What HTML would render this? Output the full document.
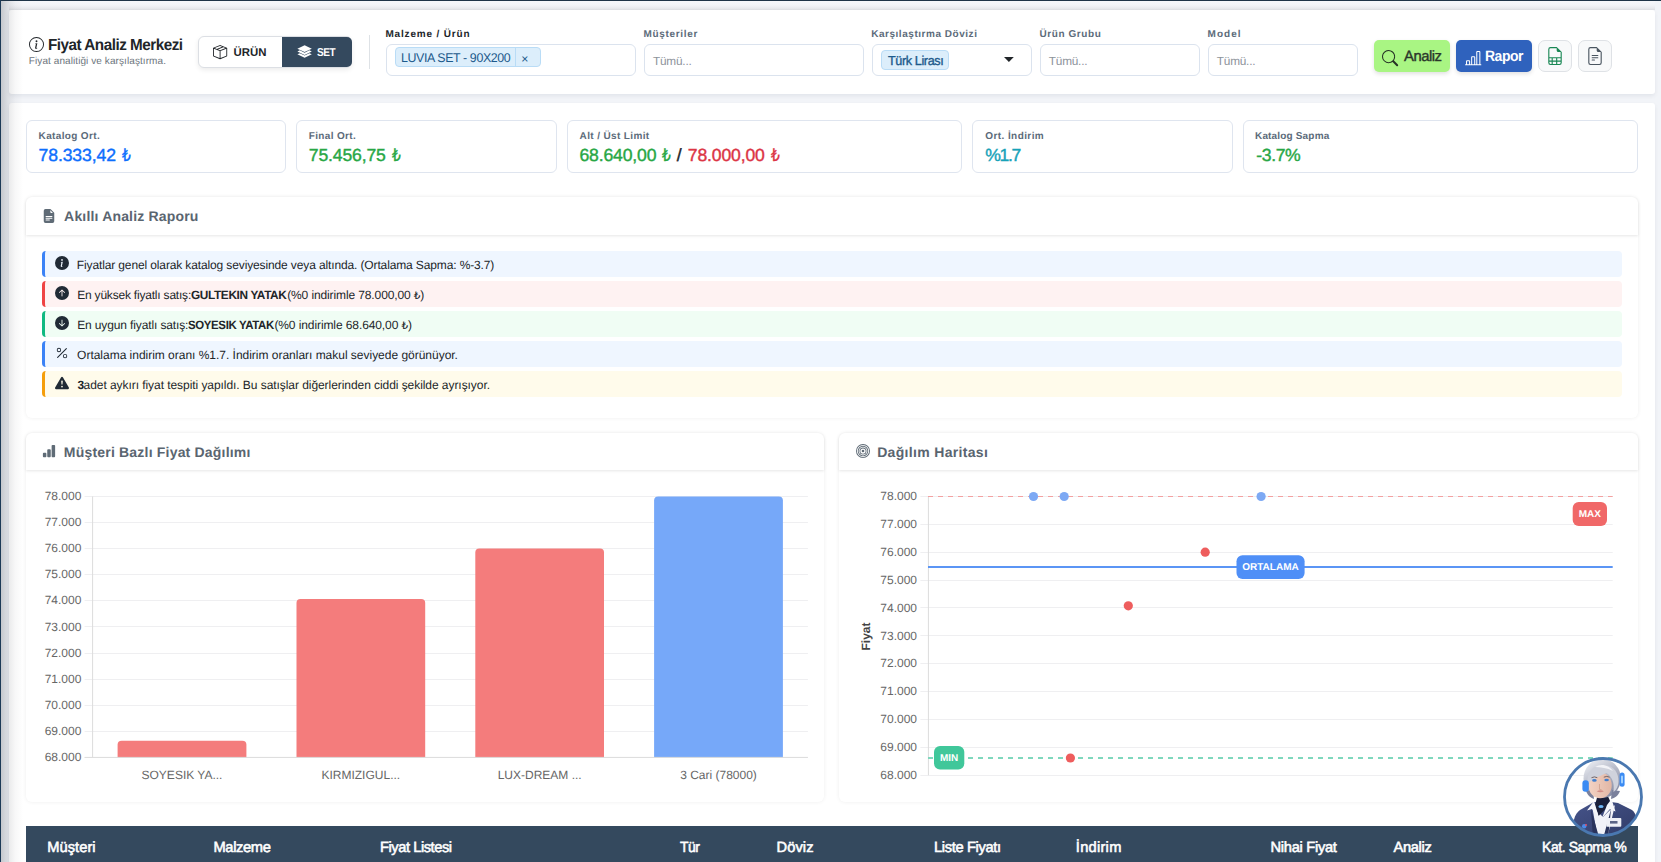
<!DOCTYPE html><html lang="tr"><head><meta charset="utf-8"><title>Fiyat Analiz Merkezi</title><style>
*{box-sizing:border-box}
html,body{margin:0;padding:0}
body{width:1661px;height:862px;overflow:hidden;position:relative;background:#f2f4f8;font-family:"Liberation Sans","DejaVu Sans",sans-serif;color:#212529;text-rendering:geometricPrecision}
.t{position:absolute;white-space:pre;line-height:1}
.tl{font-size:.86em}
.ic,.chart{position:absolute;display:block;overflow:visible}
.chart text{font-family:"Liberation Sans",sans-serif}
.card{position:absolute;background:#fff;border-radius:3px;box-shadow:0 2px 4px rgba(20,30,60,.07)}
.tog{position:absolute;background:#fff;border:1px solid #dcdfe4;border-radius:6px;box-shadow:0 2px 5px rgba(0,0,0,.08)}
.tog-on{position:absolute;background:#34495e;border-radius:0 5px 5px 0}
.vsep{position:absolute;width:1px;background:#dee2e6}
.sel{position:absolute;background:#fff;border:1px solid #dbe3ee;border-radius:6px}
.chip{position:absolute;background:#dceefb;border:1px solid #b9dcf6;border-radius:4px}
.chip i{position:absolute;top:0;bottom:0;width:1px;background:#b9dcf6}
.btn{position:absolute;border-radius:5px;box-shadow:0 2px 4px rgba(0,0,0,.12)}
.ibtn{position:absolute;background:#f8f9fa;border:1px solid #dfe2e6;border-radius:7px}
.kpi{position:absolute;background:#fff;border:1px solid #dfe5ef;border-radius:6px}
.pcard{position:absolute;background:#fff;border-radius:6px;box-shadow:0 0 4px rgba(0,0,0,.07)}
.phead{height:37.5px;border-radius:6px 6px 0 0;box-shadow:0 1px 3px rgba(0,0,0,.1)}
.arow{position:absolute;left:42px;width:1579.5px;height:25.7px;border-left:3px solid;border-radius:4px}
.topsh{position:absolute;left:9px;top:1px;width:1646px;height:9px;background:linear-gradient(180deg,#f6f7fa 0,#f3f4f8 45%,#eaebef 75%,#dfe0e4 100%)}
.thead{position:absolute;background:#34495e}
.edge-t{position:absolute;left:0;top:0;width:100%;height:1px;background:#1f3448}
.edge-l{position:absolute;left:0;top:0;width:1px;height:100%;background:#1d3a57}
.shade{position:absolute;left:1px;top:1px;width:22px;height:100%;background:linear-gradient(90deg,rgba(20,25,35,.2),rgba(20,25,35,.1) 30%,rgba(20,25,35,.03) 65%,rgba(20,25,35,0));pointer-events:none}
</style></head><body><div class="topsh"></div>
<header class="card hdr" style="left:9px;top:10px;width:1646px;height:84px">
<svg class="ic" style="left:20px;top:27px" width="15" height="15" viewBox="0 0 16 16" fill="#212529"><path d="M8 15A7 7 0 1 1 8 1a7 7 0 0 1 0 14m0 1A8 8 0 1 0 8 0a8 8 0 0 0 0 16"/><path d="m8.93 6.588-2.29.287-.082.38.45.083c.294.07.352.176.288.469l-.738 3.468c-.194.897.105 1.319.808 1.319.545 0 1.178-.252 1.465-.598l.088-.416c-.2.176-.492.246-.686.246-.275 0-.375-.193-.304-.533zM9 4.5a1 1 0 1 1-2 0 1 1 0 0 1 2 0"/></svg>
</header>
<span class="t" style="left:47.6px;top:38px;font-size:16px;font-weight:700;color:#212529;letter-spacing:-0.503px;transform:scaleX(0.952);transform-origin:0 0;">Fiyat Analiz Merkezi</span>
<span class="t" style="left:28.8px;top:57px;font-size:10px;color:#6c757d;letter-spacing:0.083px;">Fiyat analitiği ve karşılaştırma.</span>
<div class="tog" style="left:198px;top:36px;width:154px;height:32px"><div class="tog-on" style="left:83px;top:0;width:70px;height:30px"></div></div>
<svg class="ic" style="left:213.3px;top:44.8px" width="14.2" height="14.2" viewBox="0 0 16 16" fill="#212529"><path d="M8.186 1.113a.5.5 0 0 0-.372 0L1.846 3.5l2.404.961L10.404 2zm3.564 1.426L5.596 5 8 5.961 14.154 3.5zm3.25 1.7-6.5 2.6v7.922l6.5-2.6V4.24zM7.5 14.762V6.838L1 4.239v7.923zM7.443.184a1.5 1.5 0 0 1 1.114 0l7.129 2.852A.5.5 0 0 1 16 3.5v8.662a1 1 0 0 1-.629.928l-7.185 2.874a.5.5 0 0 1-.372 0L.63 13.09a1 1 0 0 1-.63-.928V3.5a.5.5 0 0 1 .314-.464z"/></svg>
<span class="t" style="left:233.4px;top:48px;font-size:11.4px;font-weight:700;color:#212529;letter-spacing:0.067px;">ÜRÜN</span>
<svg class="ic" style="left:296.8px;top:44.0px" width="15.2" height="15.2" viewBox="0 0 16 16" fill="#fff"><path d="M8 1.3 15.6 4.9 8 8.5.4 4.9z"/><path d="M.4 7.9 2.9 6.7 8 9.1l5.1-2.4 2.5 1.2L8 11.5z"/><path d="M.4 10.9 2.9 9.7 8 12.1l5.1-2.4 2.5 1.2L8 14.5z"/></svg>
<span class="t" style="left:317.4px;top:48px;font-size:11.4px;font-weight:700;color:#fff;letter-spacing:-0.538px;transform:scaleX(0.883);transform-origin:0 0;">SET</span>
<div class="vsep" style="left:369px;top:35px;height:34px"></div>
<span class="t" style="left:385.4px;top:30px;font-size:10px;font-weight:700;color:#212529;letter-spacing:0.838px;">Malzeme / Ürün</span>
<span class="t" style="left:643.4px;top:30px;font-size:10px;font-weight:700;color:#5c6b7a;letter-spacing:0.689px;">Müşteriler</span>
<span class="t" style="left:871.2px;top:30px;font-size:10px;font-weight:700;color:#5c6b7a;letter-spacing:0.534px;">Karşılaştırma Dövizi</span>
<span class="t" style="left:1039.5px;top:30px;font-size:10px;font-weight:700;color:#5c6b7a;letter-spacing:0.578px;">Ürün Grubu</span>
<span class="t" style="left:1207.6px;top:30px;font-size:10px;font-weight:700;color:#5c6b7a;letter-spacing:1.025px;">Model</span>
<div class="sel" style="left:386px;top:44px;width:250px;height:32px"></div>
<div class="sel" style="left:644px;top:44px;width:220px;height:32px"></div>
<div class="sel" style="left:872px;top:44px;width:160px;height:32px"></div>
<div class="sel" style="left:1040px;top:44px;width:160px;height:32px"></div>
<div class="sel" style="left:1208px;top:44px;width:150px;height:32px"></div>
<div class="chip" style="left:395px;top:47px;width:146px;height:20px"><i style="left:119px"></i></div>
<span class="t" style="left:400.9px;top:52px;font-size:12.6px;color:#1d5a8c;letter-spacing:-0.383px;transform:scaleX(0.983);transform-origin:0 0;">LUVIA SET - 90X200</span>
<span class="t" style="left:521.3px;top:53px;font-size:12.21px;color:#1d5a8c;letter-spacing:0.000px;">×</span>
<span class="t" style="left:653.0px;top:56px;font-size:11.8px;color:#8d939b;letter-spacing:-0.208px;">Tümü...</span>
<span class="t" style="left:1048.8px;top:56px;font-size:11.8px;color:#8d939b;letter-spacing:-0.208px;">Tümü...</span>
<span class="t" style="left:1216.8px;top:56px;font-size:11.8px;color:#8d939b;letter-spacing:-0.208px;">Tümü...</span>
<div class="chip" style="left:881px;top:50px;width:68px;height:20px"></div>
<span class="t" style="left:887.8px;top:54px;font-size:13px;color:#1d5a8c;letter-spacing:-0.402px;-webkit-text-stroke:0.35px #1d5a8c;transform:scaleX(0.971);transform-origin:0 0;">Türk Lirası</span>
<svg class="ic" style="left:1004px;top:57px" width="10" height="5" viewBox="0 0 10 5"><path d="M0 0h9.8L4.9 5z" fill="#212529"/></svg>
<div class="btn" style="left:1374px;top:40px;width:76px;height:32px;background:#a9f583"></div>
<svg class="ic" style="left:1382.4px;top:49.5px" width="16.2" height="16.2" viewBox="0 0 16 16" fill="#263326"><path d="M11.742 10.344a6.5 6.5 0 1 0-1.397 1.398h-.001q.044.06.098.115l3.85 3.85a1 1 0 0 0 1.415-1.414l-3.85-3.85a1 1 0 0 0-.115-.1zM12 6.5a5.5 5.5 0 1 1-11 0 5.5 5.5 0 0 1 11 0"/></svg>
<span class="t" style="left:1403.6px;top:49px;font-size:15px;color:#2b372b;letter-spacing:-0.496px;-webkit-text-stroke:0.4px #2b372b;transform:scaleX(0.989);transform-origin:0 0;">Analiz</span>
<div class="btn" style="left:1456px;top:40px;width:76px;height:32px;background:#2f62bd"></div>
<svg class="ic" style="left:1465.4px;top:49.6px" width="16.4" height="16.4" viewBox="0 0 16 16" fill="#fff"><path d="M11 2a1 1 0 0 1 1-1h2a1 1 0 0 1 1 1v12h.5a.5.5 0 0 1 0 1H.5a.5.5 0 0 1 0-1H1v-3a1 1 0 0 1 1-1h2a1 1 0 0 1 1 1v3h1V7a1 1 0 0 1 1-1h2a1 1 0 0 1 1 1v7h1zm1 12h2V2h-2zm-3 0V7H7v7zm-5 0v-3H2v3z"/></svg>
<span class="t" style="left:1484.8px;top:49px;font-size:15px;font-weight:700;color:#fff;letter-spacing:-0.485px;transform:scaleX(0.929);transform-origin:0 0;">Rapor</span>
<div class="ibtn" style="left:1538px;top:40px;width:33.5px;height:32px"></div>
<svg class="ic" style="left:1545.8px;top:46.9px" width="18" height="18" viewBox="0 0 16 16" fill="#198754"><path d="M14 14V4.5L9.5 0H4a2 2 0 0 0-2 2v12a2 2 0 0 0 2 2h8a2 2 0 0 0 2-2M9.5 3A1.5 1.5 0 0 0 11 4.5h2V9H3V2a1 1 0 0 1 1-1h5.5zM3 12v-2h2v2zm0 1h2v2H4a1 1 0 0 1-1-1zm3 2v-2h3v2zm4 0v-2h3v1a1 1 0 0 1-1 1zm3-3h-3v-2h3zm-7 0v-2h3v2z"/></svg>
<div class="ibtn" style="left:1578.3px;top:40px;width:33.5px;height:32px"></div>
<svg class="ic" style="left:1586.1px;top:46.9px" width="18" height="18" viewBox="0 0 16 16" fill="#4a5560"><path d="M5.5 7a.5.5 0 0 0 0 1h5a.5.5 0 0 0 0-1zM5 9.5a.5.5 0 0 1 .5-.5h5a.5.5 0 0 1 0 1h-5a.5.5 0 0 1-.5-.5m0 2a.5.5 0 0 1 .5-.5h2a.5.5 0 0 1 0 1h-2a.5.5 0 0 1-.5-.5"/><path d="M9.5 0H4a2 2 0 0 0-2 2v12a2 2 0 0 0 2 2h8a2 2 0 0 0 2-2V4.5zm0 1v2A1.5 1.5 0 0 0 11 4.5h2V14a1 1 0 0 1-1 1H4a1 1 0 0 1-1-1V2a1 1 0 0 1 1-1z"/></svg>
<main class="card" style="left:9px;top:103px;width:1646px;height:800px"></main>
<div class="kpi" style="left:26px;top:120px;width:260px;height:53px"></div>
<div class="kpi" style="left:296px;top:120px;width:261px;height:53px"></div>
<div class="kpi" style="left:567px;top:120px;width:395px;height:53px"></div>
<div class="kpi" style="left:972px;top:120px;width:261px;height:53px"></div>
<div class="kpi" style="left:1243px;top:120px;width:395px;height:53px"></div>
<span class="t" style="left:38.6px;top:132px;font-size:10px;font-weight:700;color:#5c6b7a;letter-spacing:0.350px;">Katalog Ort.</span>
<span class="t" style="left:308.8px;top:132px;font-size:10px;font-weight:700;color:#5c6b7a;letter-spacing:0.333px;">Final Ort.</span>
<span class="t" style="left:579.6px;top:132px;font-size:10px;font-weight:700;color:#5c6b7a;letter-spacing:0.364px;">Alt / Üst Limit</span>
<span class="t" style="left:985.3px;top:132px;font-size:10px;font-weight:700;color:#5c6b7a;letter-spacing:0.414px;">Ort. İndirim</span>
<span class="t" style="left:1255.0px;top:132px;font-size:10px;font-weight:700;color:#5c6b7a;letter-spacing:0.167px;">Katalog Sapma</span>
<span class="t" style="left:38.6px;top:147px;font-size:17.6px;color:#0d6efd;letter-spacing:-0.119px;-webkit-text-stroke:0.4px #0d6efd;">78.333,42</span>
<span class="t" style="left:121.5px;top:147px;font-size:17.4px;color:#0d6efd;letter-spacing:0.000px;-webkit-text-stroke:0.3px #0d6efd;transform:scaleX(.8);transform-origin:0 0;">₺</span>
<span class="t" style="left:308.8px;top:147px;font-size:17.6px;color:#28a745;letter-spacing:-0.150px;-webkit-text-stroke:0.4px #28a745;">75.456,75</span>
<span class="t" style="left:391.6px;top:147px;font-size:17.4px;color:#28a745;letter-spacing:0.000px;-webkit-text-stroke:0.3px #28a745;transform:scaleX(.8);transform-origin:0 0;">₺</span>
<span class="t" style="left:579.4px;top:147px;font-size:17.6px;color:#28a745;letter-spacing:-0.150px;-webkit-text-stroke:0.4px #28a745;">68.640,00</span>
<span class="t" style="left:662.3px;top:147px;font-size:17.4px;color:#28a745;letter-spacing:0.000px;-webkit-text-stroke:0.3px #28a745;transform:scaleX(.8);transform-origin:0 0;">₺</span>
<span class="t" style="left:676.8px;top:147px;font-size:17.6px;color:#212529;letter-spacing:0.000px;-webkit-text-stroke:0.4px #212529;">/</span>
<span class="t" style="left:687.8px;top:147px;font-size:17.6px;color:#dc3545;letter-spacing:-0.150px;-webkit-text-stroke:0.4px #dc3545;">78.000,00</span>
<span class="t" style="left:770.7px;top:147px;font-size:17.4px;color:#dc3545;letter-spacing:0.000px;-webkit-text-stroke:0.3px #dc3545;transform:scaleX(.8);transform-origin:0 0;">₺</span>
<span class="t" style="left:985.3px;top:147px;font-size:17.6px;color:#17a2b8;letter-spacing:-1.367px;-webkit-text-stroke:0.4px #17a2b8;">%1.7</span>
<span class="t" style="left:1256.2px;top:147px;font-size:17.6px;color:#28a745;letter-spacing:-0.350px;-webkit-text-stroke:0.4px #28a745;">-3.7%</span>
<section class="pcard" style="left:26px;top:197px;width:1611.5px;height:220.5px"><div class="phead"></div></section>
<svg class="ic" style="left:42px;top:209px" width="14" height="14" viewBox="0 0 16 16" fill="#5f6b76"><path d="M9.293 0H4a2 2 0 0 0-2 2v12a2 2 0 0 0 2 2h8a2 2 0 0 0 2-2V4.707A1 1 0 0 0 13.707 4L10 .293A1 1 0 0 0 9.293 0M9.5 3.5v-2l3 3h-2a1 1 0 0 1-1-1M4.5 9a.5.5 0 0 1 0-1h7a.5.5 0 0 1 0 1zM4 10.5a.5.5 0 0 1 .5-.5h7a.5.5 0 0 1 0 1h-7a.5.5 0 0 1-.5-.5m.5 2.5a.5.5 0 0 1 0-1h4a.5.5 0 0 1 0 1z"/></svg>
<span class="t" style="left:64.1px;top:209px;font-size:14px;font-weight:700;color:#5a6570;letter-spacing:0.174px;">Akıllı Analiz Raporu</span>
<div class="arow" style="top:251px;background:#eff6ff;border-left-color:#3b82f6"></div>
<svg class="ic" style="left:55px;top:256.2px" width="14" height="14" viewBox="0 0 16 16" fill="#212b36"><path d="M8 16A8 8 0 1 0 8 0a8 8 0 0 0 0 16m.93-9.412-1 4.705c-.07.34.029.533.304.533.194 0 .487-.07.686-.246l-.088.416c-.287.346-.92.598-1.465.598-.703 0-1.002-.422-.808-1.319l.738-3.468c.064-.293.006-.399-.287-.47l-.451-.081.082-.381 2.29-.287zM8 5.5a1 1 0 1 1 0-2 1 1 0 0 1 0 2"/></svg>
<div class="arow" style="top:281px;background:#fef2f2;border-left-color:#ef4444"></div>
<svg class="ic" style="left:55px;top:286.2px" width="14" height="14" viewBox="0 0 16 16" fill="#212b36"><path d="M16 8A8 8 0 1 0 0 8a8 8 0 0 0 16 0m-7.5 3.5a.5.5 0 0 1-1 0V5.707L5.354 7.854a.5.5 0 1 1-.708-.708l3-3a.5.5 0 0 1 .708 0l3 3a.5.5 0 0 1-.708.708L8.5 5.707z"/></svg>
<div class="arow" style="top:311px;background:#f0fdf4;border-left-color:#10b981"></div>
<svg class="ic" style="left:55px;top:316.2px" width="14" height="14" viewBox="0 0 16 16" fill="#212b36"><path d="M16 8A8 8 0 1 1 0 8a8 8 0 0 1 16 0M8.5 4.5a.5.5 0 0 0-1 0v5.793L5.354 8.146a.5.5 0 1 0-.708.708l3 3a.5.5 0 0 0 .708 0l3-3a.5.5 0 0 0-.708-.708L8.5 10.293z"/></svg>
<div class="arow" style="top:341px;background:#eff6ff;border-left-color:#3b82f6"></div>
<svg class="ic" style="left:55px;top:346.2px" width="14" height="14" viewBox="0 0 16 16" fill="#212b36"><path d="M13.442 2.558a.625.625 0 0 1 0 .884l-10 10a.625.625 0 1 1-.884-.884l10-10a.625.625 0 0 1 .884 0M4.5 6a1.5 1.5 0 1 1 0-3 1.5 1.5 0 0 1 0 3m0 1a2.5 2.5 0 1 0 0-5 2.5 2.5 0 0 0 0 5m7 6a1.5 1.5 0 1 1 0-3 1.5 1.5 0 0 1 0 3m0 1a2.5 2.5 0 1 0 0-5 2.5 2.5 0 0 0 0 5"/></svg>
<div class="arow" style="top:371px;background:#fffbeb;border-left-color:#f59e0b"></div>
<svg class="ic" style="left:55px;top:376.2px" width="14" height="14" viewBox="0 0 16 16" fill="#212b36"><path d="M8.982 1.566a1.13 1.13 0 0 0-1.96 0L.165 13.233c-.457.778.091 1.767.98 1.767h13.713c.889 0 1.438-.99.98-1.767zM8 5c.535 0 .954.462.9.995l-.35 3.507a.552.552 0 0 1-1.1 0L7.1 5.995A.905.905 0 0 1 8 5m.002 6a1 1 0 1 1 0 2 1 1 0 0 1 0-2"/></svg>
<span class="t" style="left:76.8px;top:259px;font-size:12px;color:#212529;letter-spacing:-0.128px;">Fiyatlar genel olarak katalog seviyesinde veya altında. (Ortalama Sapma: %-3.7)</span>
<span class="t" style="left:77.2px;top:289px;font-size:12px;color:#212529;letter-spacing:-0.202px;">En yüksek fiyatlı satış:</span>
<span class="t" style="left:190.9px;top:289px;font-size:12px;font-weight:700;color:#212529;letter-spacing:-0.363px;transform:scaleX(0.985);transform-origin:0 0;">GULTEKIN YATAK</span>
<span class="t" style="left:287.2px;top:289px;font-size:12px;color:#212529;letter-spacing:-0.116px;">(%0 indirimle 78.000,00 <span class="tl">₺</span>)</span>
<span class="t" style="left:77.2px;top:319px;font-size:12px;color:#212529;letter-spacing:-0.127px;">En uygun fiyatlı satış:</span>
<span class="t" style="left:187.8px;top:319px;font-size:12px;font-weight:700;color:#212529;letter-spacing:-0.372px;transform:scaleX(0.953);transform-origin:0 0;">SOYESIK YATAK</span>
<span class="t" style="left:274.4px;top:319px;font-size:12px;color:#212529;letter-spacing:-0.096px;">(%0 indirimle 68.640,00 <span class="tl">₺</span>)</span>
<span class="t" style="left:77.1px;top:349px;font-size:12px;color:#212529;letter-spacing:-0.019px;">Ortalama indirim oranı %1.7. İndirim oranları makul seviyede görünüyor.</span>
<span class="t" style="left:77.6px;top:379px;font-size:12px;font-weight:700;color:#212529;letter-spacing:0.000px;">3</span>
<span class="t" style="left:83.6px;top:379px;font-size:12px;color:#212529;letter-spacing:-0.061px;">adet aykırı fiyat tespiti yapıldı. Bu satışlar diğerlerinden ciddi şekilde ayrışıyor.</span>
<section class="pcard" style="left:26px;top:432.6px;width:798.2px;height:369.3px"><div class="phead" style="height:37px"></div></section>
<svg class="ic" style="left:42px;top:444px" width="14" height="14" viewBox="0 0 16 16" fill="#5f6b76"><path d="M1 11a1 1 0 0 1 1-1h2a1 1 0 0 1 1 1v3a1 1 0 0 1-1 1H2a1 1 0 0 1-1-1zm5-4a1 1 0 0 1 1-1h2a1 1 0 0 1 1 1v7a1 1 0 0 1-1 1H7a1 1 0 0 1-1-1zm5-5a1 1 0 0 1 1-1h2a1 1 0 0 1 1 1v12a1 1 0 0 1-1 1h-2a1 1 0 0 1-1-1z"/></svg>
<span class="t" style="left:63.8px;top:445px;font-size:14px;font-weight:700;color:#5a6570;letter-spacing:0.198px;">Müşteri Bazlı Fiyat Dağılımı</span>
<section class="pcard" style="left:838.7px;top:432.6px;width:799.6px;height:369.3px"><div class="phead" style="height:37px"></div></section>
<svg class="ic" style="left:855.6px;top:444.3px" width="14" height="14" viewBox="0 0 16 16" fill="#5f6b76"><path d="M8 15A7 7 0 1 1 8 1a7 7 0 0 1 0 14m0 1A8 8 0 1 0 8 0a8 8 0 0 0 0 16"/><path d="M8 13A5 5 0 1 1 8 3a5 5 0 0 1 0 10m0 1A6 6 0 1 0 8 2a6 6 0 0 0 0 12"/><path d="M8 11a3 3 0 1 1 0-6 3 3 0 0 1 0 6m0 1a4 4 0 1 0 0-8 4 4 0 0 0 0 8"/><path d="M9.5 8a1.5 1.5 0 1 1-3 0 1.5 1.5 0 0 1 3 0"/></svg>
<span class="t" style="left:877.2px;top:445px;font-size:14px;font-weight:700;color:#5a6570;letter-spacing:0.323px;">Dağılım Haritası</span>
<svg class="chart" style="left:0;top:480px" width="830" height="320" viewBox="0 480 830 320"><path d="M84.6 496.5H807.9" stroke="#efeff1" stroke-width="1"/><text x="81.4" y="500.0" text-anchor="end" fill="#666" font-size="12">78.000</text><path d="M84.6 522.5H807.9" stroke="#efeff1" stroke-width="1"/><text x="81.4" y="526.1" text-anchor="end" fill="#666" font-size="12">77.000</text><path d="M84.6 548.5H807.9" stroke="#efeff1" stroke-width="1"/><text x="81.4" y="552.2" text-anchor="end" fill="#666" font-size="12">76.000</text><path d="M84.6 574.5H807.9" stroke="#efeff1" stroke-width="1"/><text x="81.4" y="578.3" text-anchor="end" fill="#666" font-size="12">75.000</text><path d="M84.6 600.5H807.9" stroke="#efeff1" stroke-width="1"/><text x="81.4" y="604.4" text-anchor="end" fill="#666" font-size="12">74.000</text><path d="M84.6 626.5H807.9" stroke="#efeff1" stroke-width="1"/><text x="81.4" y="630.5" text-anchor="end" fill="#666" font-size="12">73.000</text><path d="M84.6 653.5H807.9" stroke="#efeff1" stroke-width="1"/><text x="81.4" y="656.6" text-anchor="end" fill="#666" font-size="12">72.000</text><path d="M84.6 679.5H807.9" stroke="#efeff1" stroke-width="1"/><text x="81.4" y="682.7" text-anchor="end" fill="#666" font-size="12">71.000</text><path d="M84.6 705.5H807.9" stroke="#efeff1" stroke-width="1"/><text x="81.4" y="708.8" text-anchor="end" fill="#666" font-size="12">70.000</text><path d="M84.6 731.5H807.9" stroke="#efeff1" stroke-width="1"/><text x="81.4" y="734.9" text-anchor="end" fill="#666" font-size="12">69.000</text><path d="M84.6 757.5H807.9" stroke="#efeff1" stroke-width="1"/><text x="81.4" y="761.0" text-anchor="end" fill="#666" font-size="12">68.000</text><path d="M92.6 496.4V757.4" stroke="#dcdcdc" stroke-width="1"/><path d="M117.6 757.4V744.7Q117.6 740.7 121.6 740.7H242.4Q246.4 740.7 246.4 744.7V757.4Z" fill="#f47c7c"/><text x="182.0" y="778.9" text-anchor="middle" fill="#666" font-size="12">SOYESIK YA...</text><path d="M296.5 757.4V603.0Q296.5 599.0 300.5 599.0H421.2Q425.2 599.0 425.2 603.0V757.4Z" fill="#f47c7c"/><text x="360.8" y="778.9" text-anchor="middle" fill="#666" font-size="12">KIRMIZIGUL...</text><path d="M475.3 757.4V552.6Q475.3 548.6 479.3 548.6H600.0Q604.0 548.6 604.0 552.6V757.4Z" fill="#f47c7c"/><text x="539.7" y="778.9" text-anchor="middle" fill="#666" font-size="12">LUX-DREAM ...</text><path d="M654.1 757.4V500.4Q654.1 496.4 658.1 496.4H778.9Q782.9 496.4 782.9 500.4V757.4Z" fill="#76a8f9"/><text x="718.5" y="778.9" text-anchor="middle" fill="#666" font-size="12">3 Cari (78000)</text><path d="M84.6 757.4H807.9" stroke="#dcdcdc" stroke-width="1"/></svg>
<svg class="chart" style="left:830px;top:480px" width="831" height="320" viewBox="830 480 831 320"><path d="M920.4 496.5H1612.7" stroke="#efeff1" stroke-width="1"/><text x="917" y="500.1" text-anchor="end" fill="#666" font-size="12">78.000</text><path d="M920.4 524.5H1612.7" stroke="#efeff1" stroke-width="1"/><text x="917" y="528.0" text-anchor="end" fill="#666" font-size="12">77.000</text><path d="M920.4 552.5H1612.7" stroke="#efeff1" stroke-width="1"/><text x="917" y="555.8" text-anchor="end" fill="#666" font-size="12">76.000</text><path d="M920.4 580.5H1612.7" stroke="#efeff1" stroke-width="1"/><text x="917" y="583.7" text-anchor="end" fill="#666" font-size="12">75.000</text><path d="M920.4 607.5H1612.7" stroke="#efeff1" stroke-width="1"/><text x="917" y="611.6" text-anchor="end" fill="#666" font-size="12">74.000</text><path d="M920.4 635.5H1612.7" stroke="#efeff1" stroke-width="1"/><text x="917" y="639.5" text-anchor="end" fill="#666" font-size="12">73.000</text><path d="M920.4 663.5H1612.7" stroke="#efeff1" stroke-width="1"/><text x="917" y="667.3" text-anchor="end" fill="#666" font-size="12">72.000</text><path d="M920.4 691.5H1612.7" stroke="#efeff1" stroke-width="1"/><text x="917" y="695.2" text-anchor="end" fill="#666" font-size="12">71.000</text><path d="M920.4 719.5H1612.7" stroke="#efeff1" stroke-width="1"/><text x="917" y="723.1" text-anchor="end" fill="#666" font-size="12">70.000</text><path d="M920.4 747.5H1612.7" stroke="#efeff1" stroke-width="1"/><text x="917" y="750.9" text-anchor="end" fill="#666" font-size="12">69.000</text><path d="M920.4 775.5H1612.7" stroke="#efeff1" stroke-width="1"/><text x="917" y="778.8" text-anchor="end" fill="#666" font-size="12">68.000</text><path d="M928.4 496.5V775.2" stroke="#dcdcdc" stroke-width="1"/><text transform="translate(870.2 636.5) rotate(-90)" text-anchor="middle" fill="#444" font-size="12" font-weight="700">Fiyat</text><path d="M928.0 496.5H1612.7" stroke="#f4a0a0" stroke-width="1" stroke-dasharray="5 5"/><path d="M928.0 758H1612.7" stroke="#7fd8bd" stroke-width="2" stroke-dasharray="5 5"/><path d="M928.0 567H1612.7" stroke="#5b95f5" stroke-width="2"/><circle cx="1033.5" cy="496.5" r="4.6" fill="#7da9f4"/><circle cx="1064.2" cy="496.5" r="4.6" fill="#7da9f4"/><circle cx="1261.1" cy="496.5" r="4.6" fill="#7da9f4"/><circle cx="1205.2" cy="552.2" r="4.6" fill="#ee5d5d"/><circle cx="1128.3" cy="605.8" r="4.6" fill="#ee5d5d"/><circle cx="1070.4" cy="758.0" r="4.6" fill="#ee5d5d"/><rect x="1572.7" y="502" width="34.3" height="24.1" rx="6" fill="#f06868"/><text x="1589.8" y="516.9" text-anchor="middle" fill="#fff" font-size="10" font-weight="700">MAX</text><rect x="1236.5" y="555.3" width="68.1" height="23.6" rx="6" fill="#4f8ff7"/><text x="1270.5" y="570.0" text-anchor="middle" fill="#fff" font-size="10" font-weight="700">ORTALAMA</text><rect x="934" y="746" width="30.3" height="23.6" rx="6" fill="#40c79a"/><text x="949.1" y="760.7" text-anchor="middle" fill="#fff" font-size="10" font-weight="700">MIN</text></svg>
<div class="thead" style="left:26px;top:826px;width:1612px;height:40px"></div>
<span class="t" style="left:47.2px;top:841px;font-size:14.7px;color:#fff;letter-spacing:0.042px;-webkit-text-stroke:0.55px #fff;">Müşteri</span>
<span class="t" style="left:213.5px;top:841px;font-size:14.7px;color:#fff;letter-spacing:-0.375px;-webkit-text-stroke:0.55px #fff;">Malzeme</span>
<span class="t" style="left:380.2px;top:841px;font-size:14.7px;color:#fff;letter-spacing:-0.439px;-webkit-text-stroke:0.55px #fff;transform:scaleX(0.997);transform-origin:0 0;">Fiyat Listesi</span>
<span class="t" style="left:680.0px;top:841px;font-size:14.7px;color:#fff;letter-spacing:-0.527px;-webkit-text-stroke:0.55px #fff;transform:scaleX(0.949);transform-origin:0 0;">Tür</span>
<span class="t" style="left:776.5px;top:841px;font-size:14.7px;color:#fff;letter-spacing:0.062px;-webkit-text-stroke:0.55px #fff;">Döviz</span>
<span class="t" style="left:934.0px;top:841px;font-size:14.7px;color:#fff;letter-spacing:-0.364px;-webkit-text-stroke:0.55px #fff;">Liste Fiyatı</span>
<span class="t" style="left:1075.8px;top:841px;font-size:14.7px;color:#fff;letter-spacing:0.250px;-webkit-text-stroke:0.55px #fff;">İndirim</span>
<span class="t" style="left:1270.5px;top:841px;font-size:14.7px;color:#fff;letter-spacing:-0.300px;-webkit-text-stroke:0.55px #fff;">Nihai Fiyat</span>
<span class="t" style="left:1393.5px;top:841px;font-size:14.7px;color:#fff;letter-spacing:-0.350px;-webkit-text-stroke:0.55px #fff;">Analiz</span>
<span class="t" style="left:1541.5px;top:841px;font-size:14.7px;color:#fff;letter-spacing:-0.453px;-webkit-text-stroke:0.55px #fff;transform:scaleX(0.953);transform-origin:0 0;">Kat. Sapma %</span>
<svg class="ic" style="left:1561px;top:755px" width="84" height="84" viewBox="-42 -42 84 84">
<defs><clipPath id="av"><circle r="38.4"/></clipPath>
<linearGradient id="hg" x1=".2" y1="0" x2=".8" y2="1"><stop offset="0" stop-color="#eceef3"/><stop offset=".45" stop-color="#b7bbc9"/><stop offset="1" stop-color="#7e849f"/></linearGradient>
<linearGradient id="sg" x1="0" y1="0" x2="1" y2="1"><stop offset="0" stop-color="#46548a"/><stop offset="1" stop-color="#2f3a66"/></linearGradient>
<linearGradient id="fg" x1="0" y1="0" x2="1" y2="0"><stop offset="0" stop-color="#f3d3c4"/><stop offset="1" stop-color="#e2b7a6"/></linearGradient></defs>
<g clip-path="url(#av)">
<path d="M-31 42C-31 27-29 17-23 13L-9 5h17l7 1 14 7c5 4 6 12 7 29Z" fill="url(#sg)"/>
<path d="M-11 9-5 42h9L12 8 0 20z" fill="#f1f2f8"/>
<path d="M-5-3h9l3.500 8v2L-4.500 19-8 8z" fill="#1a1f3a"/>
<ellipse cx="-2" cy="9.500" rx="2.600" ry="1.500" fill="#6fb6f5"/>
<path d="M-9 4-16 13.500-11 12-4.500 19zM8.500 2 12.500 14.500 7 12-1 21 4 8z" fill="#f6f7fb"/>
<path d="M-12 12-4 40-2 42h-8zM8 12l-8 30h5z" fill="#29335c"/>
<ellipse cx="-.8" cy="-18.500" rx="18.700" ry="19.600" fill="url(#hg)"/>
<path d="M-17-6c2 5 5 7 8 8l-1-9zM17-6c-2 5-5 7-9 8l1-9z" fill="#7b819c"/>
<ellipse cx="-2.900" cy="-11.600" rx="11.600" ry="12.800" fill="url(#fg)"/>
<path d="M-15.500-13C-17-27-8-33 2-32c9 1 14 8 13.500 17-.2 4-2 8-5 10 1-9-1-15-7-19-6 3-13 5-19 11z" fill="#cfd2dc"/>
<path d="M-8-30c6-4 14-2 18 4-6-3-12-4-18-4z" fill="#f2f3f7"/>
<ellipse cx="-8.600" cy="-16.600" rx="2.300" ry="1.300" fill="#3f7fd0"/><ellipse cx="3.600" cy="-17" rx="2.300" ry="1.300" fill="#3f7fd0"/>
<path d="M-11.500-19.300q3-1.600 5.800 0M.8-19.800q3-1.600 5.800 0" stroke="#6b5a5a" stroke-width=".9" fill="none"/>
<path d="M-6.300-5.700q3.600 1.800 7.300 0-3.600-2-7.300 0z" fill="#d48d86"/>
<path d="M-3.500-13v5.500h2" stroke="#d3a592" stroke-width=".9" fill="none"/>
<rect x="16.600" y="-24.500" width="5" height="14.200" rx="2.500" fill="#3b8bf3"/><rect x="18" y="-21.500" width="2" height="8" rx="1" fill="#9fd0ff"/>
<rect x="-20.600" y="-16.800" width="6.400" height="11.600" rx="3" fill="#3b8bf3"/>
<rect x="3.300" y="20.900" width="15" height="8.900" rx="1" fill="#eef0f6"/><rect x="7" y="24" width="7.500" height="2.600" fill="#5b6486"/>
<circle cx="-18.800" cy="29.200" r="2.200" fill="#4c8ae8"/><circle cx="-17" cy="28" r="1" fill="#e0526a"/>
</g>
<circle r="38.500" fill="none" stroke="#4a78b0" stroke-width="2.800"/>
</svg><div class="shade"></div><div class="edge-t"></div><div class="edge-l"></div></body></html>
